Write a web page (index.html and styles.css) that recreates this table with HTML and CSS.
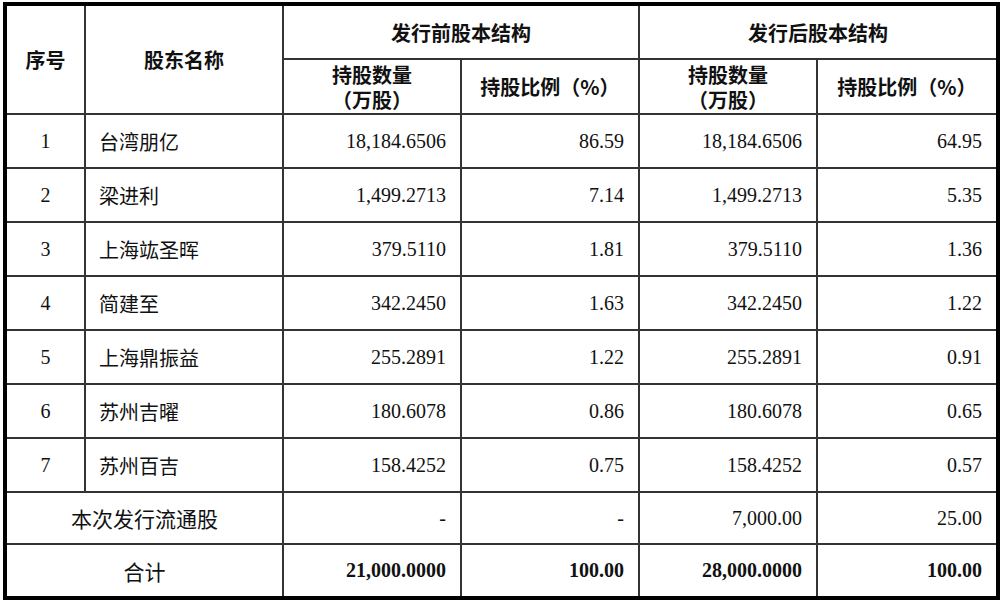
FILE: index.html
```html
<!DOCTYPE html>
<html lang="zh-CN">
<head>
<meta charset="utf-8">
<link rel="stylesheet" href="styles.css">
</head>
<body>
<table class="tbl">
  <colgroup>
    <col class="c1"><col class="c2"><col class="c3"><col class="c4"><col class="c5"><col class="c6">
  </colgroup>
  <thead>
    <tr class="h1">
      <th rowspan="2">序号</th>
      <th rowspan="2">股东名称</th>
      <th colspan="2">发行前股本结构</th>
      <th colspan="2">发行后股本结构</th>
    </tr>
    <tr class="h2">
      <th>持股数量<br>（万股）</th>
      <th>持股比例（%）</th>
      <th>持股数量<br>（万股）</th>
      <th>持股比例（%）</th>
    </tr>
  </thead>
  <tbody>
    <tr class="r"><td class="ctr">1</td><td class="name">台湾朋亿</td><td class="num">18,184.6506</td><td class="num">86.59</td><td class="num">18,184.6506</td><td class="num">64.95</td></tr>
    <tr class="r"><td class="ctr">2</td><td class="name">梁进利</td><td class="num">1,499.2713</td><td class="num">7.14</td><td class="num">1,499.2713</td><td class="num">5.35</td></tr>
    <tr class="r"><td class="ctr">3</td><td class="name">上海竑圣晖</td><td class="num">379.5110</td><td class="num">1.81</td><td class="num">379.5110</td><td class="num">1.36</td></tr>
    <tr class="r"><td class="ctr">4</td><td class="name">简建至</td><td class="num">342.2450</td><td class="num">1.63</td><td class="num">342.2450</td><td class="num">1.22</td></tr>
    <tr class="r"><td class="ctr">5</td><td class="name">上海鼎振益</td><td class="num">255.2891</td><td class="num">1.22</td><td class="num">255.2891</td><td class="num">0.91</td></tr>
    <tr class="r"><td class="ctr">6</td><td class="name">苏州吉曜</td><td class="num">180.6078</td><td class="num">0.86</td><td class="num">180.6078</td><td class="num">0.65</td></tr>
    <tr class="r"><td class="ctr">7</td><td class="name">苏州百吉</td><td class="num">158.4252</td><td class="num">0.75</td><td class="num">158.4252</td><td class="num">0.57</td></tr>
    <tr class="r2"><td class="ctr" colspan="2">本次发行流通股</td><td class="num">-</td><td class="num">-</td><td class="num">7,000.00</td><td class="num">25.00</td></tr>
    <tr class="r3 total"><td class="ctr" colspan="2">合计</td><td class="num">21,000.0000</td><td class="num">100.00</td><td class="num">28,000.0000</td><td class="num">100.00</td></tr>
  </tbody>
</table>
</body>
</html>
```
FILE: styles.css
```css
html, body {
  margin: 0;
  padding: 0;
  background: #ffffff;
}
body {
  padding: 2px 0 0 3px;
}
.tbl {
  border-collapse: collapse;
  table-layout: fixed;
  width: 993px;
  border: 4px solid #000;
  font-family: "Liberation Serif", "Noto Sans CJK SC", serif;
  font-size: 20px;
  color: #111;
}
.c1 { width: 80px; }
.c2 { width: 198px; }
.c3 { width: 178px; }
.c4 { width: 178px; }
.c5 { width: 178px; }
.c6 { width: 181px; }
.tbl th,
.tbl td {
  border: 2px solid #333;
  padding: 0 14px 0 12px;
  vertical-align: middle;
}
.tbl th {
  font-family: "Noto Sans CJK SC", sans-serif;
  font-weight: 700;
  font-size: 20px;
  line-height: 25px;
  text-align: center;
  padding: 0 6px;
}
.h1 { height: 55px; }
.h2 { height: 55px; }
.r { height: 54px; }
.r2 { height: 52px; }
.r3 { height: 54px; }
.ctr { text-align: center; }
.tbl td.ctr { padding: 0; }
.name {
  text-align: left;
}
.tbl td.name { padding-left: 13px; }
.num { text-align: right; }
.tbl td.name,
.tbl td[colspan] {
  font-family: "Noto Sans CJK SC", sans-serif;
  font-size: 20px;
}
.tbl td[colspan] { font-size: 21px; }
.total .num { font-weight: 700; }
```
